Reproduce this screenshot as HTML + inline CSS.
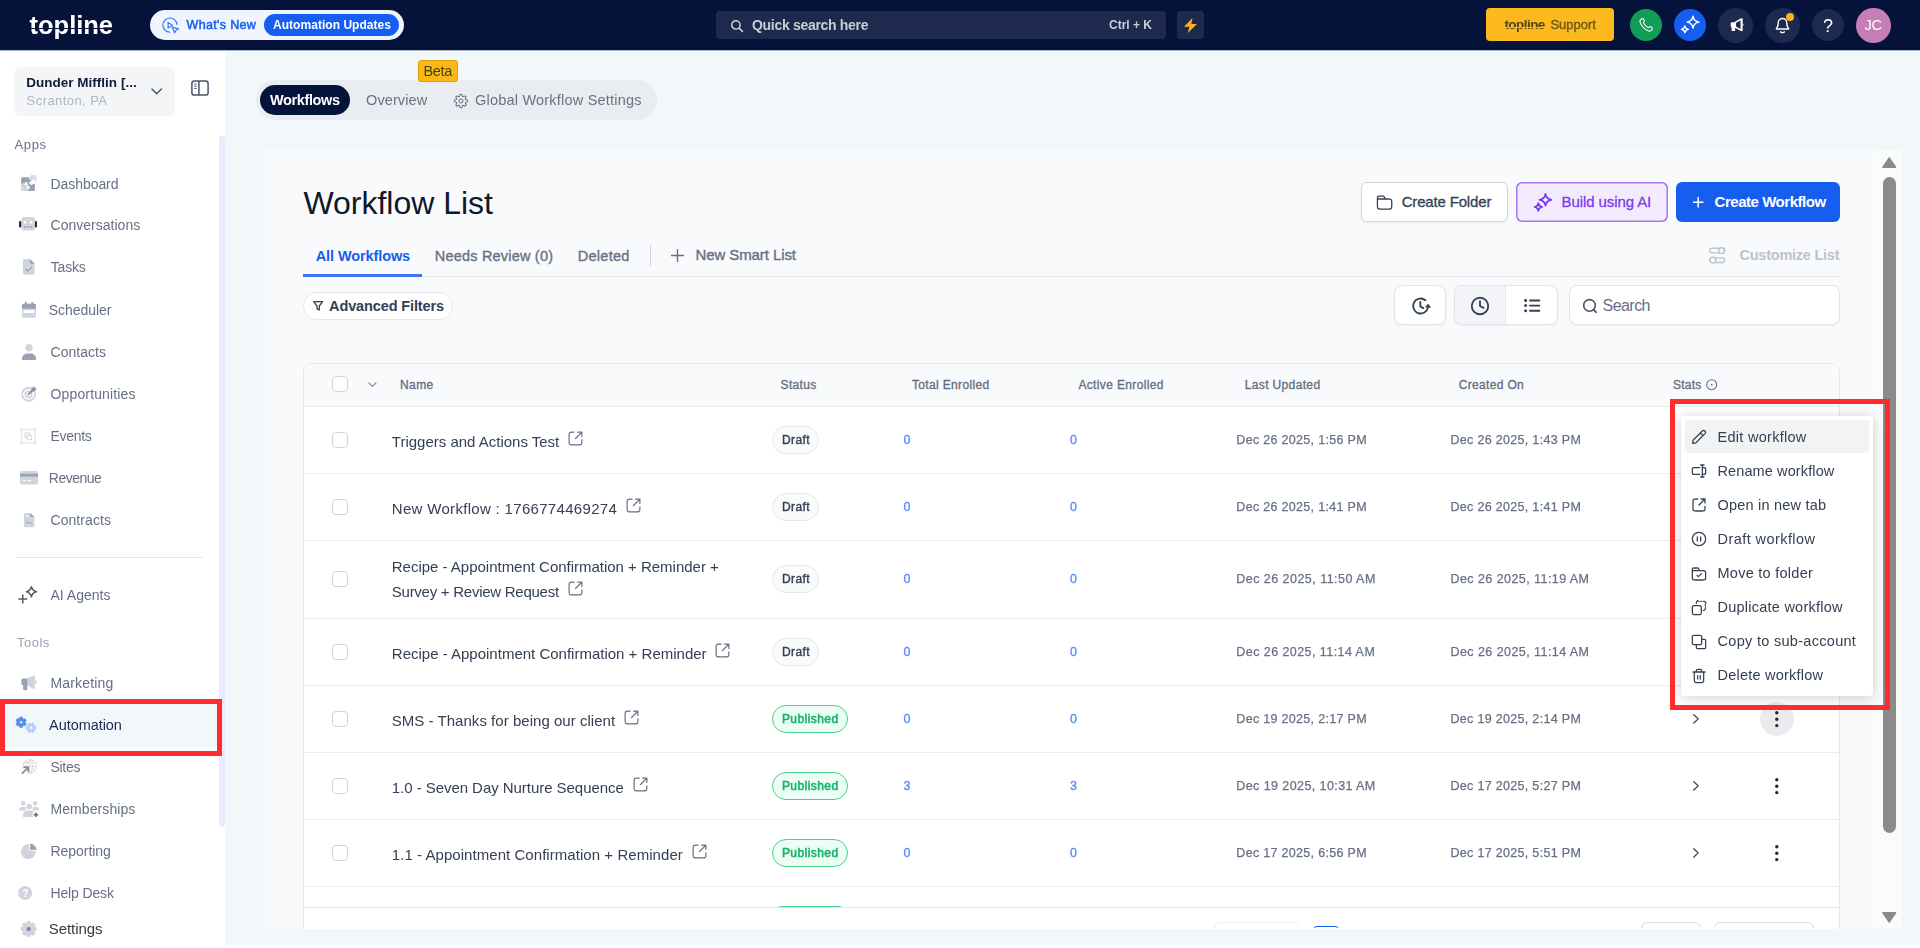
<!DOCTYPE html>
<html lang="en">
<head>
<meta charset="utf-8">
<title>Workflow List</title>
<style>
*{box-sizing:border-box;margin:0;padding:0}
html,body{width:1920px;height:948px;overflow:hidden}
body{font-family:"Liberation Sans",sans-serif;background:#fff;color:#101828;position:relative;font-size:14px}
svg{display:block;overflow:visible}
a{text-decoration:none}
h1{font-weight:400}
#bg{position:absolute;left:225px;top:51px;width:1695px;height:894px;background:#f2f7fa}
#top{position:absolute;left:0;top:0;width:1920px;height:50px;will-change:transform}
#topbg{position:absolute;left:0;top:0;width:1920px;height:50px;background:#05123a}
#topline{position:absolute;left:0;top:50px;width:1920px;height:1px;background:#aab4c6}
#side{position:absolute;left:0;top:0;width:225px;height:948px;will-change:transform}
#main{position:absolute;left:0;top:0;width:1920px;height:948px}
.gl{position:absolute;left:0;top:0;width:1920px;height:948px;will-change:transform}
#card{position:absolute;left:265px;top:150px;width:1636px;height:778px;background:#f9fafb}
.ann{position:absolute;border:5px solid #fd2c2f;pointer-events:none}
</style>
</head>
<body>
<div id="bg"></div>
<div id="topline"></div>
<div id="topbg"></div>
<header id="top">
<span style="position:absolute;left:29.6px;top:13px;font-size:25.5px;line-height:1;white-space:nowrap;color:#fff;font-weight:700;letter-spacing:-0.030px;">topline</span>
<div style="position:absolute;left:28px;top:28.3px;width:87px;height:0.9px;background:#05123a"></div>
<div style="position:absolute;left:150px;top:10px;width:254px;height:30px;background:#eff4ff;border-radius:15px"></div>
<svg style="position:absolute;left:161.60px;top:16.70px;" width="17" height="17" viewBox="0 0 24 24" fill="none"><path d="M21.200 10.400A10 10 0 1 0 10.800 21.400" stroke="#3b7cf6" stroke-width="1.700" stroke-linecap="round"/><path d="M8.600 7.600v8l6.200-4z" stroke="#3b7cf6" stroke-width="1.700" stroke-linejoin="round"/><path d="M14.400 14.200l9 2.600-3.800 1.800-1.800 3.900z" stroke="#3b7cf6" stroke-width="1.700" stroke-linejoin="round"/></svg>
<span style="position:absolute;left:186.6px;top:19px;font-size:12.5px;line-height:1;white-space:nowrap;color:#155eef;letter-spacing:0.334px;-webkit-text-stroke:.5px #155eef;">What's New</span>
<div style="position:absolute;left:264px;top:14px;width:135px;height:22px;background:#155eef;border-radius:11px"></div>
<span style="position:absolute;left:273.0px;top:19px;font-size:12px;line-height:1;white-space:nowrap;color:#fff;font-weight:700;letter-spacing:0.039px;">Automation Updates</span>
<div style="position:absolute;left:716px;top:11px;width:450px;height:28px;background:#1e2a4d;border-radius:4px"></div>
<svg style="position:absolute;left:729.50px;top:18.50px;" width="13.5" height="13.5" viewBox="0 0 24 24" fill="none"><circle cx="10.5" cy="10.5" r="7.5" stroke="#d0d5dd" stroke-width="2.6"/><path d="M16.5 16.5L22 22" stroke="#d0d5dd" stroke-width="2.8" stroke-linecap="round"/></svg>
<span style="position:absolute;left:752.0px;top:18px;font-size:14px;line-height:1;white-space:nowrap;color:#c8cdd8;font-weight:700;letter-spacing:-0.307px;">Quick search here</span>
<span style="position:absolute;left:1109.0px;top:19px;font-size:12px;line-height:1;white-space:nowrap;color:#c8cdd8;font-weight:700;letter-spacing:-0.002px;">Ctrl + K</span>
<div style="position:absolute;left:1177px;top:11px;width:27px;height:28px;background:#1e2a4d;border-radius:4px"></div>
<svg style="position:absolute;left:1184px;top:17.600px" width="13" height="15" viewBox="3 1 16 22" preserveAspectRatio="none"><path d="M13.500 1L3 13.800h6.600L7.800 23 19 9.800h-7z" fill="#fdb022"/></svg>
<div style="position:absolute;left:1486px;top:8px;width:128.2px;height:33.2px;background:#fbb91c;border-radius:4px"></div>
<span style="position:absolute;left:1504.4px;top:18px;font-size:13.5px;line-height:1;white-space:nowrap;color:#564414;font-weight:700;letter-spacing:-0.542px;">topline</span>
<div style="position:absolute;left:1504px;top:26.7px;width:42px;height:0.5px;background:#fbb91c"></div>
<span style="position:absolute;left:1550.4px;top:18px;font-size:13px;line-height:1;white-space:nowrap;color:#66561c;letter-spacing:0.009px;-webkit-text-stroke:.3px #66561c;">Support</span>
<div style="position:absolute;left:1629.8px;top:8.9px;width:32.4px;height:32.4px;background:#0f9d58;border-radius:50%"></div>
<svg style="position:absolute;left:1638.00px;top:17.00px;" width="16" height="16" viewBox="0 0 24 24" fill="none"><path d="M8.38 8.853a14.603 14.603 0 002.847 4.01 14.603 14.603 0 004.01 2.847c.124.06.187.09.265.112.28.082.625.023.862-.147.067-.048.124-.105.239-.219.35-.35.524-.524.7-.639a2 2 0 012.18 0c.176.115.35.29.7.64l.195.194c.532.532.797.798.942 1.083a2 2 0 010 1.806c-.145.285-.41.551-.942 1.083l-.157.158c-.53.53-.795.794-1.155.997-.4.224-1.020.386-1.479.384-.413-.001-.695-.081-1.260-.241a19.038 19.038 0 01-8.283-4.874A19.039 19.039 0 013.17 7.764c-.16-.565-.24-.847-.241-1.26-.002-.459.16-1.079.384-1.479.203-.36.468-.625.997-1.155l.158-.157c.532-.532.798-.797 1.083-.942a2 2 0 011.806 0c.285.145.551.41 1.083.942l.195.195c.35.35.524.524.639.7a2 2 0 010 2.18c-.115.176-.29.35-.64.7-.114.115-.171.172-.219.239-.17.237-.229.582-.147.862.022.078.052.14.112.265z" stroke="#fff" stroke-width="1.6" stroke-linecap="round" stroke-linejoin="round"/></svg>
<div style="position:absolute;left:1674px;top:8.9px;width:32px;height:32.4px;background:#155eef;border-radius:50%"></div>
<svg style="position:absolute;left:1680.00px;top:12.00px;" width="20" height="20" viewBox="0 0 24 24" fill="none"><path d="M15.6 4.8999999999999995Q16.54 11.16 22.80 12.10Q16.54 13.04 15.60 19.30Q14.66 13.04 8.40 12.10Q14.66 11.16 15.60 4.90Z" stroke="#fff" stroke-width="1.700" stroke-linejoin="round"/><path d="M5.8 16.700000000000003Q6.33 20.27 9.90 20.80Q6.33 21.33 5.80 24.90Q5.27 21.33 1.70 20.80Q5.27 20.27 5.80 16.70Z" stroke="#fff" stroke-width="1.700" stroke-linejoin="round"/></svg>
<div style="position:absolute;left:1718px;top:7.8px;width:35px;height:35.4px;background:#1e2a4d;border-radius:50%"></div>
<svg style="position:absolute;left:1730.20px;top:17.90px;" width="13.4" height="13.1" viewBox="0 0 13.4 13.1" fill="none"><path d="M.7 5.2a1 1 0 011-1h3.6v5h-3.600a1 1 0 01-1-1z" fill="#fff"/><path d="M1.600 9h3.600v3.200a.9.9 0 01-.9.900h-1.800a.9.9 0 01-.9-.9z" fill="#fff"/><path d="M5.300 4.400l6-3.400v11.400l-6-3.400z" stroke="#fff" stroke-width="1.500" stroke-linejoin="round"/><path d="M12.100 .3v12.800" stroke="#fff" stroke-width="1.100"/><path d="M13 5.800v1.800" stroke="#fff" stroke-width=".8"/></svg>
<div style="position:absolute;left:1764.8px;top:7.8px;width:35.2px;height:35.4px;background:#1e2a4d;border-radius:50%"></div>
<svg style="position:absolute;left:1773.50px;top:17.00px;" width="17" height="17" viewBox="0 0 24 24" fill="none"><path d="M9.354 21c.705.622 1.632 1 2.646 1s1.94-.378 2.646-1M18 8A6 6 0 106 8c0 3.09-.78 5.206-1.650 6.605-.735 1.180-1.102 1.770-1.089 1.935.015.182.054.252.2.360.133.100.731.100 1.927.100h13.224c1.196 0 1.794 0 1.927-.1.146-.108.185-.178.2-.36.013-.165-.354-.755-1.089-1.935C18.780 13.206 18 11.090 18 8z" stroke="#fff" stroke-width="2" stroke-linecap="round" stroke-linejoin="round"/></svg>
<div style="position:absolute;left:1786px;top:13.2px;width:8px;height:8px;background:#fdb022;border-radius:50%"></div>
<div style="position:absolute;left:1812px;top:8.9px;width:32px;height:32.4px;background:#1e2a4d;border-radius:50%"></div>
<span style="position:absolute;left:1823.0px;top:17px;font-size:18px;line-height:1;white-space:nowrap;color:#fff;">?</span>
<div style="position:absolute;left:1856px;top:7.8px;width:35px;height:35.4px;background:#c57fb6;border-radius:50%"></div>
<span style="position:absolute;left:1864.6px;top:18px;font-size:14.5px;line-height:1;white-space:nowrap;color:#fff;letter-spacing:-0.334px;">JC</span>
</header>
<nav id="side">
<div style="position:absolute;left:14px;top:66.5px;width:161px;height:49.5px;background:#f4f5f7;border-radius:7px"></div>
<span style="position:absolute;left:26.2px;top:76px;font-size:13.5px;line-height:1;white-space:nowrap;color:#101a3a;font-weight:700;letter-spacing:0.014px;">Dunder Mifflin [...</span>
<span style="position:absolute;left:26.6px;top:94px;font-size:13px;line-height:1;white-space:nowrap;color:#aeb6c4;letter-spacing:0.433px;">Scranton, PA</span>
<svg style="position:absolute;left:151.30px;top:88.00px;" width="11.4" height="6.7" viewBox="0 0 12 7" fill="none"><path d="M1 1l5 5 5-5" stroke="#475467" stroke-width="1.5" stroke-linecap="round" stroke-linejoin="round"/></svg>
<svg style="position:absolute;left:191.00px;top:80.40px;" width="18" height="16" viewBox="0 0 18 16" fill="none"><rect x=".9" y=".9" width="16.2" height="14.2" rx="2.4" stroke="#475467" stroke-width="1.5"/><path d="M7.9 1v14" stroke="#475467" stroke-width="1.5"/><path d="M3.2 4h2.4M3.2 6.2h2.4M3.2 8.4h2.4" stroke="#475467" stroke-width="1"/></svg>
<span style="position:absolute;left:14.5px;top:138px;font-size:13px;line-height:1;white-space:nowrap;color:#667085;letter-spacing:0.620px;">Apps</span>
<div style="position:absolute;left:219px;top:136.3px;width:5.8px;height:690.5px;background:#ebe9fe;border-radius:3px"></div>
<a style="position:absolute;left:50.5px;top:177px;font-size:14px;line-height:1;white-space:nowrap;color:#667085;letter-spacing:-0.062px;">Dashboard</a>
<a style="position:absolute;left:50.5px;top:218px;font-size:14px;line-height:1;white-space:nowrap;color:#667085;letter-spacing:0.017px;">Conversations</a>
<a style="position:absolute;left:50.8px;top:260px;font-size:14px;line-height:1;white-space:nowrap;color:#667085;letter-spacing:-0.199px;">Tasks</a>
<a style="position:absolute;left:48.8px;top:303px;font-size:14px;line-height:1;white-space:nowrap;color:#667085;letter-spacing:-0.056px;">Scheduler</a>
<a style="position:absolute;left:50.5px;top:345px;font-size:14px;line-height:1;white-space:nowrap;color:#667085;letter-spacing:0.021px;">Contacts</a>
<a style="position:absolute;left:50.5px;top:387px;font-size:14px;line-height:1;white-space:nowrap;color:#667085;letter-spacing:0.143px;">Opportunities</a>
<a style="position:absolute;left:50.5px;top:429px;font-size:14px;line-height:1;white-space:nowrap;color:#667085;letter-spacing:-0.303px;">Events</a>
<a style="position:absolute;left:48.8px;top:471px;font-size:14px;line-height:1;white-space:nowrap;color:#667085;letter-spacing:-0.491px;">Revenue</a>
<a style="position:absolute;left:50.5px;top:513px;font-size:14px;line-height:1;white-space:nowrap;color:#667085;letter-spacing:0.060px;">Contracts</a>
<a style="position:absolute;left:50.5px;top:588px;font-size:14px;line-height:1;white-space:nowrap;color:#667085;letter-spacing:-0.005px;">AI Agents</a>
<a style="position:absolute;left:50.5px;top:676px;font-size:14px;line-height:1;white-space:nowrap;color:#667085;letter-spacing:0.154px;">Marketing</a>
<a style="position:absolute;left:50.5px;top:760px;font-size:14px;line-height:1;white-space:nowrap;color:#667085;letter-spacing:-0.306px;">Sites</a>
<a style="position:absolute;left:50.5px;top:802px;font-size:14px;line-height:1;white-space:nowrap;color:#667085;letter-spacing:0.077px;">Memberships</a>
<a style="position:absolute;left:50.5px;top:844px;font-size:14px;line-height:1;white-space:nowrap;color:#667085;letter-spacing:-0.038px;">Reporting</a>
<a style="position:absolute;left:50.5px;top:886px;font-size:14px;line-height:1;white-space:nowrap;color:#667085;letter-spacing:-0.137px;">Help Desk</a>
<div style="position:absolute;left:16.2px;top:557px;width:186.7px;height:1px;background:#e4e7f0"></div>
<span style="position:absolute;left:16.9px;top:636px;font-size:13px;line-height:1;white-space:nowrap;color:#98a2b3;letter-spacing:0.510px;">Tools</span>
<div style="position:absolute;left:0px;top:704px;width:219px;height:42.5px;background:#f2f7fa"></div>
<a style="position:absolute;left:49.1px;top:718px;font-size:14.5px;line-height:1;white-space:nowrap;color:#1d2b53;letter-spacing:-0.062px;">Automation</a>
<a style="position:absolute;left:48.8px;top:921px;font-size:15px;line-height:1;white-space:nowrap;color:#333a44;letter-spacing:-0.086px;">Settings</a>
<svg style="position:absolute;left:21.00px;top:175.20px;" width="15.7" height="16.2" viewBox="0 0 15.7 16.2" fill="none"><path d="M1.300 2.300h5.800a1.200 1.200 0 011.200 1.200v.900a1.300 1.300 0 110 2.400v1.900h-2.100a1.300 1.300 0 10-2.400 0h-3.700v-5.200a1.200 1.200 0 011.200-1.200z" fill="#98a2b3"/><path d="M.100 8.800h3.300a1.500 1.500 0 103 0h.700v2.300a1.300 1.300 0 100 2.600v2.200h-5.800a1.200 1.200 0 01-1.200-1.200z" fill="#d0d5dd"/><path d="M7.300 8.800h1.900l1.400 1.700 1.500-1.700h1.800v5.900a1.200 1.200 0 01-1.200 1.200h-5.400v-2a1.500 1.500 0 100-3z" fill="#98a2b3"/><path d="M9.500 0h5a1.200 1.200 0 011.200 1.200v5.200h-2.200a1.300 1.300 0 10-2.300 0h-1.700v-2a1.300 1.300 0 110-2.400z" fill="#d0d5dd" opacity=".75"/></svg>
<svg style="position:absolute;left:18.90px;top:216.90px;" width="18" height="13.4" viewBox="0 0 18 13.4" fill="none"><rect x="0" y="4.100" width="2.800" height="6.400" rx="1.300" fill="#2a2f3a"/><rect x="15.200" y="4.100" width="2.800" height="6.400" rx="1.300" fill="#2a2f3a"/><rect x="2.300" y="0" width="13.700" height="13.400" rx="3" fill="#d0d5dd"/><rect x="4.900" y="4.100" width="2.400" height="2.500" fill="#fff"/><rect x="11" y="4.100" width="2.300" height="2.500" fill="#fff"/><rect x="5.200" y="9.100" width="1.500" height="1.600" fill="#8a90a0"/><rect x="8.200" y="9.100" width="1.500" height="1.600" fill="#8a90a0"/><rect x="11.200" y="9.100" width="1.500" height="1.600" fill="#8a90a0"/></svg>
<svg style="position:absolute;left:23.30px;top:259.20px;" width="11.6" height="15.7" viewBox="0 0 11.6 15.7" fill="none"><path d="M1.500 0h5.400l4.700 4.700v9.500a1.500 1.500 0 01-1.500 1.500h-8.600a1.500 1.500 0 01-1.500-1.500v-12.700a1.500 1.500 0 011.500-1.500z" fill="#d0d5dd"/><path d="M6.900 0l4.700 4.700h-3.500a1.200 1.200 0 01-1.200-1.200z" fill="#98a2b3"/><path d="M2.400 9.900l2.300 2.300 4.600-4.600" stroke="#98a2b3" stroke-width="1.300" fill="none"/></svg>
<svg style="position:absolute;left:22.00px;top:301.80px;" width="14" height="15.7" viewBox="0 0 14 15.7" fill="none"><rect x="0" y="1.700" width="14" height="14" rx="1.500" fill="#d0d5dd"/><path d="M0 3.200a1.500 1.500 0 011.500-1.500h11a1.500 1.500 0 011.500 1.500v3.600h-14z" fill="#98a2b3"/><rect x="2.800" y="0" width="1.800" height="3.400" rx=".6" fill="#98a2b3"/><rect x="9.400" y="0" width="1.800" height="3.400" rx=".6" fill="#98a2b3"/><rect x="1.600" y="8.200" width="10.800" height="2.800" fill="#fff"/></svg>
<svg style="position:absolute;left:22.00px;top:343.60px;" width="14" height="16" viewBox="0 0 14 16" fill="none"><circle cx="7" cy="3.700" r="3.700" fill="#d0d5dd"/><path d="M0 16v-1.200c0-3 2.400-5.300 5.300-5.300h3.400c2.900 0 5.300 2.300 5.300 5.300v1.200z" fill="#98a2b3"/></svg>
<svg style="position:absolute;left:21.00px;top:385.80px;" width="16" height="15.8" viewBox="0 0 16 15.8" fill="none"><circle cx="7.600" cy="8.200" r="6.500" stroke="#d0d5dd" stroke-width="1.900"/><circle cx="7.600" cy="8.200" r="3.100" stroke="#d0d5dd" stroke-width="1.700"/><path d="M7.400 8.400l4.400-4.400" stroke="#8791a5" stroke-width="1.900" stroke-linecap="round"/><path d="M10.400 2.800l2.800-2.800.5 2.300 2.300.5-2.800 2.800-2.500-.3z" fill="#8791a5"/></svg>
<svg style="position:absolute;left:19.70px;top:427.60px;" width="16.5" height="16.4" viewBox="0 0 16.5 16.4" fill="none"><rect x="1.500" y="1.500" width="13.500" height="13.400" stroke="#e4e7ec" stroke-width="1.300"/><rect x="0" y="0" width="3" height="3" rx=".8" fill="#e4e7ec"/><rect x="13.500" y="0" width="3" height="3" rx=".8" fill="#e4e7ec"/><rect x="0" y="13.400" width="3" height="3" rx=".8" fill="#e4e7ec"/><rect x="13.500" y="13.400" width="3" height="3" rx=".8" fill="#e4e7ec"/><rect x="5" y="5" width="4.500" height="4.500" stroke="#d0d5dd" stroke-width="1"/><rect x="7.200" y="7.200" width="4.500" height="4.500" stroke="#d0d5dd" stroke-width="1" fill="#fff"/></svg>
<svg style="position:absolute;left:20.00px;top:471.00px;" width="18" height="13.6" viewBox="0 0 18 13.6" fill="none"><rect x="0" y="0" width="18" height="13.600" rx="1.800" fill="#d0d5dd"/><rect x="0" y="2.700" width="18" height="2.900" fill="#98a2b3"/><rect x="2.800" y="9.200" width="2.800" height="1.200" fill="#fff"/><rect x="6.800" y="9.200" width="4.400" height="1.200" fill="#fff"/></svg>
<svg style="position:absolute;left:23.90px;top:512.50px;" width="10.4" height="14.2" viewBox="0 0 10.4 14.2" fill="none"><path d="M1.300 0h5l4.100 4.100v8.800a1.300 1.300 0 01-1.300 1.300h-7.800a1.300 1.300 0 01-1.300-1.300v-11.600a1.300 1.300 0 011.300-1.300z" fill="#d0d5dd"/><path d="M6.300 0l4.100 4.100h-3a1.100 1.100 0 01-1.100-1.100z" fill="#98a2b3"/><rect x="2.200" y="2" width="2" height="2.400" fill="#eef0f3"/><path d="M2.200 10.800l1.300-2.200 1.100 2 1-.6h2.600" stroke="#98a2b3" stroke-width=".9" fill="none"/></svg>
<svg style="position:absolute;left:18.30px;top:586.00px;" width="19.2" height="18" viewBox="0 0 19.2 18" fill="none"><path d="M13.4 0.7999999999999998Q14.40 4.80 18.40 5.80Q14.40 6.80 13.40 10.80Q12.40 6.80 8.40 5.80Q12.40 4.80 13.40 0.80Z" stroke="#525866" stroke-width="1.500" stroke-linejoin="round"/><path d="M4.800 8.600v8.800M.4 13h8.800" stroke="#525866" stroke-width="1.500"/></svg>
<svg style="position:absolute;left:20.90px;top:675.40px;" width="16" height="15.6" viewBox="0 0 16 15.6" fill="none"><path d="M5.800 3.600l8-3.600v14.500l-8-4.200z" fill="#d0d5dd"/><path d="M13.800 5.200a2.100 2.100 0 010 4.200z" fill="#d0d5dd"/><path d="M1.900 3.600h4.400v6.700h-4.400a1.500 1.500 0 01-1.500-1.500v-3.700a1.500 1.500 0 011.500-1.500z" fill="#98a2b3"/><path d="M2.100 10h4.200v4.100a1.200 1.200 0 01-1.200 1.200h-1.800a1.200 1.200 0 01-1.200-1.200z" fill="#98a2b3"/></svg>
<svg style="position:absolute;left:16.20px;top:717.20px;" width="20.6" height="16.2" viewBox="0 0 20.6 16.2" fill="none"><path d="M3.71 -0.02L6.49 -0.02L6.84 1.60L7.35 1.89L8.93 1.39L10.31 3.79L9.09 4.91L9.09 5.49L10.31 6.61L8.93 9.01L7.35 8.51L6.84 8.80L6.49 10.42L3.71 10.42L3.36 8.80L2.85 8.51L1.27 9.01L-0.11 6.61L1.11 5.49L1.11 4.91L-0.11 3.79L1.27 1.39L2.85 1.89L3.36 1.60ZM6.6 5.2a1.5 1.5 0 10-3.0 0a1.5 1.5 0 103.0 0Z" fill="#558af0" fill-rule="evenodd" stroke="#558af0" stroke-width=".5" stroke-linejoin="round"/><path d="M20.03 9.46L20.03 12.14L18.51 12.50L18.22 12.99L18.67 14.48L16.35 15.82L15.29 14.69L14.71 14.69L13.65 15.82L11.33 14.48L11.78 12.99L11.49 12.50L9.97 12.14L9.97 9.46L11.49 9.10L11.78 8.61L11.33 7.12L13.65 5.78L14.71 6.91L15.29 6.91L16.35 5.78L18.67 7.12L18.22 8.61L18.51 9.10ZM16.6 10.8a1.6 1.6 0 10-3.2 0a1.6 1.6 0 103.2 0Z" fill="#b9cffa" fill-rule="evenodd" stroke="#b9cffa" stroke-width=".5" stroke-linejoin="round"/></svg>
<svg style="position:absolute;left:20.90px;top:759.30px;" width="16" height="15.8" viewBox="0 0 16 15.8" fill="none"><circle cx="8.600" cy="7.400" r="6.700" stroke="#d9dce3" stroke-width="1.500" stroke-dasharray="2.600 1.100"/><ellipse cx="8.600" cy="7.400" rx="3" ry="6.700" stroke="#d9dce3" stroke-width="1.300" stroke-dasharray="2.600 1.100"/><path d="M2 7.400h13.300M3 3.800h11.200M3 11h11.200M8.600 .800v13.200" stroke="#d9dce3" stroke-width="1.200" stroke-dasharray="2.400 1"/><path d="M0 15.800l.800-5 5.800-4.600 2.800 2.600-3.800 7z" fill="#fff"/><path d="M1.400 14.200l5.600-5.600M3.400 8.200h4v4" stroke="#858da0" stroke-width="1.800" fill="none" stroke-linecap="round" stroke-linejoin="round"/></svg>
<svg style="position:absolute;left:18.80px;top:800.90px;" width="20.4" height="16.1" viewBox="0 0 20.4 16.1" fill="none"><circle cx="4.200" cy="2.200" r="2.200" fill="#d0d5dd"/><circle cx="10.200" cy="5.400" r="2.700" fill="#d0d5dd"/><circle cx="16.200" cy="2.200" r="2.200" fill="#d0d5dd"/><path d="M0 9.600c0-2.200 1.700-3.800 3.800-3.800h1.400c.6 0 1.200.2 1.700.5-.6 1-.6 2.300.3 3.300z" fill="#d0d5dd"/><path d="M20.400 9.600c0-2.200-1.700-3.800-3.800-3.800h-1.400c-.6 0-1.200.2-1.700.5.600 1 .6 2.300-.3 3.300z" fill="#d0d5dd"/><path d="M4 16v-2c0-2.700 2-4.600 4.600-4.600h3.200c2.600 0 4.600 1.900 4.600 4.600v2z" fill="#d0d5dd"/><circle cx="16.800" cy="13.600" r="3.200" fill="#fff"/><path d="M16.900 11.400v4.600M14.600 13.700h4.600" stroke="#5f667a" stroke-width="1.500"/></svg>
<svg style="position:absolute;left:20.90px;top:843.00px;" width="16" height="16.1" viewBox="0 0 16 16.1" fill="none"><circle cx="7.400" cy="8.700" r="7.400" fill="#d0d5dd"/><path d="M8.600 0a7.400 7.400 0 017.400 7.400h-7.400z" fill="#98a2b3" stroke="#fff" stroke-width="1"/></svg>
<svg style="position:absolute;left:17.90px;top:886.00px;" width="14.3" height="14" viewBox="0 0 14.3 14" fill="none"><circle cx="7.100" cy="7" r="7" fill="#d0d5dd"/></svg>
<span style="position:absolute;left:22.6px;top:889px;font-size:10px;line-height:1;white-space:nowrap;color:#fff;font-weight:700;">?</span>
<svg style="position:absolute;left:21.20px;top:921.40px;" width="15.4" height="16" viewBox="0 0 15.4 16" fill="none"><path d="M15.44 6.43L15.44 9.57L13.16 10.24L13.14 10.27L14.28 12.36L12.06 14.58L9.97 13.44L9.94 13.46L9.27 15.74L6.13 15.74L5.46 13.46L5.43 13.44L3.34 14.58L1.12 12.36L2.26 10.27L2.24 10.24L-0.04 9.57L-0.04 6.43L2.24 5.76L2.26 5.73L1.12 3.64L3.34 1.42L5.43 2.56L5.46 2.54L6.13 0.26L9.27 0.26L9.94 2.54L9.97 2.56L12.06 1.42L14.28 3.64L13.14 5.73L13.16 5.76ZM7.7 8a0 0 0 10-0 0a0 0 0 100 0Z" fill="#d0d5dd" fill-rule="evenodd" stroke="#d0d5dd" stroke-width=".5" stroke-linejoin="round"/><circle cx="7.700" cy="8" r="2.100" fill="#7a85a0"/></svg>
</nav>
<main id="main">
<div class="gl" id="modtabs">
<div style="position:absolute;left:256px;top:80px;width:401px;height:40px;background:#e9edf1;border-radius:20px"></div>
<div style="position:absolute;left:260px;top:85px;width:90px;height:30px;background:#05123a;border-radius:15px"></div>
<span style="position:absolute;left:270.0px;top:93px;font-size:14.5px;line-height:1;white-space:nowrap;color:#fff;font-weight:700;letter-spacing:-0.381px;">Workflows</span>
<span style="position:absolute;left:366.0px;top:93px;font-size:14.5px;line-height:1;white-space:nowrap;color:#6b7280;letter-spacing:0.109px;">Overview</span>
<svg style="position:absolute;left:452.80px;top:92.50px;" width="16" height="16" viewBox="0 0 24 24" fill="none"><circle cx="12" cy="12" r="3" stroke="#6b7280" stroke-width="1.500"/><path d="M18.727 14.727a1.500 1.500 0 00.300 1.655l.055.054a1.816 1.816 0 010 2.573 1.818 1.818 0 01-2.573 0l-.055-.055a1.500 1.500 0 00-1.654-.300 1.500 1.500 0 00-.910 1.373v.155a1.818 1.818 0 11-3.636 0v-.082a1.500 1.500 0 00-.982-1.373 1.500 1.500 0 00-1.654.300l-.055.055a1.818 1.818 0 01-3.106-1.287 1.818 1.818 0 01.533-1.286l.055-.055a1.500 1.500 0 00.300-1.654 1.500 1.500 0 00-1.373-.910h-.155a1.818 1.818 0 110-3.636h.082a1.500 1.500 0 001.373-.982 1.500 1.500 0 00-.300-1.654l-.055-.055a1.818 1.818 0 112.573-2.573l.055.055a1.500 1.500 0 001.654.300h.073a1.500 1.500 0 00.909-1.373v-.155a1.818 1.818 0 013.636 0v.082a1.500 1.500 0 00.910 1.373 1.500 1.500 0 001.654-.300l.055-.055a1.818 1.818 0 112.573 2.573l-.055.055a1.500 1.500 0 00-.300 1.654v.073a1.500 1.500 0 001.373.909h.155a1.818 1.818 0 010 3.636h-.082a1.500 1.500 0 00-1.373.910z" stroke="#667085" stroke-width="1.600" stroke-linecap="round" stroke-linejoin="round"/></svg>
<span style="position:absolute;left:475.0px;top:93px;font-size:14.5px;line-height:1;white-space:nowrap;color:#6b7280;letter-spacing:0.208px;">Global Workflow Settings</span>
<div style="position:absolute;left:418px;top:60px;width:40px;height:22px;background:#fdb913;border:1px solid #dc9d07;border-radius:3px"></div>
<span style="position:absolute;left:423.4px;top:64px;font-size:14.5px;line-height:1;white-space:nowrap;color:#44401f;letter-spacing:-0.281px;">Beta</span>
</div>
<section id="card">
</section>
<div style="position:absolute;left:1878px;top:150px;width:23px;height:778px;background:#fbfbfb"></div>
<svg style="position:absolute;left:1882.30px;top:156.60px;" width="14.5" height="11" viewBox="0 0 14.5 11" fill="none"><path d="M7.250 .800l6.400 9.400h-12.800z" fill="#8b8b8b" stroke="#8b8b8b" stroke-width="1.400" stroke-linejoin="round"/></svg>
<div style="position:absolute;left:1883px;top:177px;width:12.9px;height:655.8px;background:#8b8b8b;border-radius:6.500px"></div>
<svg style="position:absolute;left:1882.30px;top:911.60px;" width="14.5" height="11" viewBox="0 0 14.5 11" fill="none"><path d="M7.250 10.200l6.400-9.400h-12.800z" fill="#8b8b8b" stroke="#8b8b8b" stroke-width="1.400" stroke-linejoin="round"/></svg>
<h1 style="position:absolute;left:303.4px;top:187px;font-size:32px;line-height:1;white-space:nowrap;color:#101828;letter-spacing:-0.006px;margin:0;">Workflow List</h1>
<div style="position:absolute;left:1361px;top:182px;width:147px;height:40px;background:#fff;border:1px solid #d0d5dd;border-radius:6px;box-shadow:0 1px 2px rgba(16,24,40,.06)"></div>
<svg style="position:absolute;left:1376.20px;top:193.60px;" width="17.2" height="17.2" viewBox="0 0 24 24" fill="none"><path d="M13 7l-1.116-2.231c-.32-.642-.481-.963-.72-1.198a2 2 0 00-.748-.462C10.100 3 9.740 3 9.022 3H5.200c-1.120 0-1.680 0-2.108.218a2 2 0 00-.874.874C2 4.520 2 5.080 2 6.200V7m0 0h15.200c1.680 0 2.520 0 3.162.327a3 3 0 011.311 1.311C22 9.280 22 10.120 22 11.800v4.400c0 1.680 0 2.520-.327 3.162a3 3 0 01-1.311 1.311C19.720 21 18.880 21 17.200 21H6.800c-1.680 0-2.520 0-3.162-.327a3 3 0 01-1.311-1.311C2 18.720 2 17.880 2 16.200V7z" stroke="#344054" stroke-width="1.800" stroke-linecap="round" stroke-linejoin="round"/></svg>
<span style="position:absolute;left:1401.7px;top:194px;font-size:15px;line-height:1;white-space:nowrap;color:#344054;letter-spacing:-0.168px;-webkit-text-stroke:.3px #344054;">Create Folder</span>
<div style="position:absolute;left:1516px;top:182px;width:152px;height:40px;background:#f3ebfd;box-shadow:inset 0 0 0 1.600px #a57af0;border-radius:6px"></div>
<svg style="position:absolute;left:1533.00px;top:190.00px;" width="20" height="20" viewBox="0 0 24 24" fill="none"><path d="M15 4.66Q15.92 10.84 22.10 11.76Q15.92 12.68 15.00 18.86Q14.08 12.68 7.90 11.76Q14.08 10.84 15.00 4.66Z" stroke="#7c3aed" stroke-width="2.100" stroke-linejoin="round"/><path d="M6.4 15.799999999999999Q7.00 19.80 11.00 20.40Q7.00 21.00 6.40 25.00Q5.80 21.00 1.80 20.40Q5.80 19.80 6.40 15.80Z" stroke="#7c3aed" stroke-width="2.100" stroke-linejoin="round"/></svg>
<span style="position:absolute;left:1561.5px;top:194px;font-size:15px;line-height:1;white-space:nowrap;color:#7c3aed;letter-spacing:-0.085px;-webkit-text-stroke:.3px #7c3aed;">Build using AI</span>
<div style="position:absolute;left:1676px;top:182px;width:164px;height:40.4px;background:#155eef;border-radius:6px"></div>
<svg style="position:absolute;left:1693.20px;top:197.30px;" width="10.4" height="10.4" viewBox="0 0 10.4 10.4" fill="none"><path d="M5.200 0v10.400M0 5.200h10.400" stroke="#fff" stroke-width="1.500"/></svg>
<span style="position:absolute;left:1714.6px;top:194px;font-size:15px;line-height:1;white-space:nowrap;color:#fff;font-weight:700;letter-spacing:-0.471px;">Create Workflow</span>
<div style="position:absolute;left:303px;top:276px;width:1537px;height:1px;background:#e4e7ec"></div>
<div style="position:absolute;left:303px;top:274px;width:119.3px;height:2.6px;background:#3b73f5"></div>
<span style="position:absolute;left:315.7px;top:249px;font-size:14.5px;line-height:1;white-space:nowrap;color:#155eef;font-weight:700;letter-spacing:-0.092px;">All Workflows</span>
<span style="position:absolute;left:434.8px;top:249px;font-size:14.5px;line-height:1;white-space:nowrap;color:#667085;letter-spacing:0.197px;-webkit-text-stroke:.35px #667085;">Needs Review (0)</span>
<span style="position:absolute;left:577.7px;top:249px;font-size:14.5px;line-height:1;white-space:nowrap;color:#667085;letter-spacing:0.286px;-webkit-text-stroke:.35px #667085;">Deleted</span>
<div style="position:absolute;left:650px;top:245.4px;width:1px;height:20.2px;background:#d0d5dd"></div>
<svg style="position:absolute;left:670.70px;top:248.90px;" width="13" height="13" viewBox="0 0 13 13" fill="none"><path d="M6.500 0v13M0 6.500h13" stroke="#667085" stroke-width="1.400"/></svg>
<span style="position:absolute;left:695.4px;top:247px;font-size:15px;line-height:1;white-space:nowrap;color:#667085;letter-spacing:-0.085px;-webkit-text-stroke:.35px #667085;">New Smart List</span>
<svg style="position:absolute;left:1708.60px;top:247.00px;" width="16.4" height="16.8" viewBox="0 0 16.4 16.8" fill="none"><rect x=".700" y="1.300" width="15" height="4.600" rx="2.300" stroke="#bcc3ce" stroke-width="1.400"/><circle cx="12.500" cy="3.700" r="2.900" stroke="#bcc3ce" stroke-width="1.400" fill="#f9fafb"/><rect x=".700" y="10.900" width="15" height="4.600" rx="2.300" stroke="#bcc3ce" stroke-width="1.400"/><circle cx="3.900" cy="13.200" r="2.900" stroke="#bcc3ce" stroke-width="1.400" fill="#f9fafb"/></svg>
<span style="position:absolute;left:1739.5px;top:248px;font-size:14.5px;line-height:1;white-space:nowrap;color:#bcc3ce;font-weight:700;letter-spacing:-0.240px;">Customize List</span>
<div style="position:absolute;left:303px;top:291.6px;width:149.5px;height:28.2px;background:#fff;border:1px solid #e4e7ec;border-radius:14px"></div>
<svg style="position:absolute;left:313.00px;top:300.50px;" width="10.3" height="10.4" viewBox="0 0 10.3 10.4" fill="none"><path d="M.700 .700h8.900l-3.300 4.300v3.900l-2.300-1.100v-2.800z" stroke="#344054" stroke-width="1.300" stroke-linejoin="round"/></svg>
<span style="position:absolute;left:329.1px;top:299px;font-size:14.5px;line-height:1;white-space:nowrap;color:#344054;font-weight:700;letter-spacing:-0.130px;">Advanced Filters</span>
<div style="position:absolute;left:1394px;top:285px;width:51.5px;height:40px;background:#fff;border:1px solid #e1e4ea;border-radius:8px;box-shadow:0 1px 2px rgba(16,24,40,.05)"></div>
<svg style="position:absolute;left:1410.50px;top:295.50px;" width="20" height="20" viewBox="0 0 24 24" fill="none"><path d="M20.360 13.560A9 9 0 1117.290 5.110" stroke="#344054" stroke-width="2.200" stroke-linecap="round"/><path d="M11.200 7.200v5.200l3.600 2.100" stroke="#344054" stroke-width="2.200" stroke-linecap="round" stroke-linejoin="round"/><path d="M17.600 13.200l3 -3.400 2.600 3.800z" fill="#344054" stroke="#344054" stroke-width="1" stroke-linejoin="round"/></svg>
<div style="position:absolute;left:1454px;top:285px;width:103.5px;height:40px;background:#fff;border:1px solid #e1e4ea;border-radius:8px;overflow:hidden;box-shadow:0 1px 2px rgba(16,24,40,.05)"><div style="position:absolute;left:0;top:0;width:50.500px;height:100%;background:#f2f4f7;border-right:1px solid #e4e7ec"></div></div>
<svg style="position:absolute;left:1469.90px;top:295.50px;" width="20" height="20" viewBox="0 0 24 24" fill="none"><circle cx="12" cy="12" r="9.900" stroke="#344054" stroke-width="2.200"/><path d="M12 6.200V12l4.200 2.300" stroke="#344054" stroke-width="2.200" stroke-linecap="round" stroke-linejoin="round"/></svg>
<svg style="position:absolute;left:1523.50px;top:298.90px;" width="17" height="13.2" viewBox="0 0 17 13.2" fill="none"><path d="M6 1.500h9.400M6 6.600h9.400M6 11.700h9.400" stroke="#344054" stroke-width="1.900" stroke-linecap="round"/><circle cx="1.600" cy="1.500" r="1.500" fill="#344054"/><circle cx="1.600" cy="6.600" r="1.500" fill="#344054"/><circle cx="1.600" cy="11.700" r="1.500" fill="#344054"/></svg>
<div style="position:absolute;left:1568.5px;top:285px;width:271.5px;height:40px;background:#fff;border:1px solid #e1e4ea;border-radius:8px;box-shadow:0 1px 2px rgba(16,24,40,.05)"></div>
<svg style="position:absolute;left:1582.00px;top:297.50px;" width="16" height="16" viewBox="0 0 16 16" fill="none"><circle cx="7.500" cy="7.400" r="5.800" stroke="#475467" stroke-width="1.600"/><path d="M11.700 11.600L13.900 14.200" stroke="#475467" stroke-width="1.800" stroke-linecap="round"/></svg>
<span style="position:absolute;left:1602.5px;top:298px;font-size:16px;line-height:1;white-space:nowrap;color:#667085;letter-spacing:-0.541px;">Search</span>
<div id="tbl" style="position:absolute;left:303px;top:362.500px;width:1537px;height:566px;border:1px solid #e4e7ec;border-bottom:0;border-radius:9px 9px 0 0;background:#fff;overflow:hidden">
<div style="position:absolute;left:0;top:0;width:100%;height:43px;background:#f9fafb;border-bottom:1px solid #e4e7ec"></div>
</div>
<div style="position:absolute;left:332px;top:376px;width:16px;height:16px;background:#fff;border:1px solid #d0d5dd;border-radius:4px"></div>
<svg style="position:absolute;left:367.80px;top:382.00px;" width="8.8" height="5.8" viewBox="0 0 8.8 5.8" fill="none"><path d="M.800 .800l3.600 3.600 3.600-3.600" stroke="#7d8799" stroke-width="1.150" stroke-linecap="round" stroke-linejoin="round"/></svg>
<span style="position:absolute;left:400.0px;top:379px;font-size:12px;line-height:1;white-space:nowrap;color:#626d82;letter-spacing:0.395px;-webkit-text-stroke:.3px #626d82;">Name</span>
<span style="position:absolute;left:780.6px;top:379px;font-size:12px;line-height:1;white-space:nowrap;color:#626d82;letter-spacing:0.334px;-webkit-text-stroke:.3px #626d82;">Status</span>
<span style="position:absolute;left:911.9px;top:379px;font-size:12px;line-height:1;white-space:nowrap;color:#626d82;letter-spacing:0.352px;-webkit-text-stroke:.3px #626d82;">Total Enrolled</span>
<span style="position:absolute;left:1078.4px;top:379px;font-size:12px;line-height:1;white-space:nowrap;color:#626d82;letter-spacing:0.361px;-webkit-text-stroke:.3px #626d82;">Active Enrolled</span>
<span style="position:absolute;left:1244.7px;top:379px;font-size:12px;line-height:1;white-space:nowrap;color:#626d82;letter-spacing:0.364px;-webkit-text-stroke:.3px #626d82;">Last Updated</span>
<span style="position:absolute;left:1458.8px;top:379px;font-size:12px;line-height:1;white-space:nowrap;color:#626d82;letter-spacing:0.328px;-webkit-text-stroke:.3px #626d82;">Created On</span>
<span style="position:absolute;left:1673.0px;top:379px;font-size:12px;line-height:1;white-space:nowrap;color:#626d82;letter-spacing:0.235px;-webkit-text-stroke:.3px #626d82;">Stats</span>
<svg style="position:absolute;left:1706.30px;top:378.80px;" width="11.4" height="11.4" viewBox="0 0 11.4 11.4" fill="none"><circle cx="5.700" cy="5.700" r="5" stroke="#667085" stroke-width="1.100"/><circle cx="5.700" cy="5.700" r=".900" fill="#667085"/></svg>
<div class="gl" id="rows">
<div style="position:absolute;left:304px;top:473px;width:1535px;height:1px;background:#eaecf0"></div>
<div style="position:absolute;left:332px;top:431.7px;width:16px;height:16px;background:#fff;border:1px solid #d0d5dd;border-radius:4px"></div>
<span style="position:absolute;left:391.8px;top:434px;font-size:15px;line-height:1;white-space:nowrap;color:#344054;letter-spacing:-0.004px;">Triggers and Actions Test</span>
<svg style="position:absolute;left:567.10px;top:430.00px;" width="17" height="17" viewBox="0 0 24 24" fill="none"><path d="M21 9V3m0 0h-6m6 0l-9 9m-2-9H7.800c-1.680 0-2.520 0-3.162.327a3 3 0 00-1.311 1.311C3 5.280 3 6.120 3 7.800v8.400c0 1.680 0 2.520.327 3.162a3 3 0 001.311 1.311C5.280 21 6.120 21 7.800 21h8.400c1.680 0 2.520 0 3.162-.327a3 3 0 001.311-1.311C21 18.720 21 17.880 21 16.200V14" stroke="#667085" stroke-width="1.7" stroke-linecap="round" stroke-linejoin="round"/></svg>
<div style="position:absolute;left:772.4px;top:425.5px;width:47px;height:28px;background:#f9fafb;border:1px solid #e4e7ec;border-radius:14px"></div>
<span style="position:absolute;left:782.0px;top:434px;font-size:12px;line-height:1;white-space:nowrap;color:#344054;letter-spacing:0.421px;-webkit-text-stroke:.38px #344054;">Draft</span>
<span style="position:absolute;left:903.4px;top:434px;font-size:12.5px;line-height:1;white-space:nowrap;color:#528bff;letter-spacing:0.547px;-webkit-text-stroke:.3px #528bff;">0</span>
<span style="position:absolute;left:1070.0px;top:434px;font-size:12.5px;line-height:1;white-space:nowrap;color:#528bff;letter-spacing:0.547px;-webkit-text-stroke:.3px #528bff;">0</span>
<span style="position:absolute;left:1236.3px;top:434px;font-size:12.5px;line-height:1;white-space:nowrap;color:#667085;letter-spacing:0.311px;-webkit-text-stroke:.25px #667085;">Dec 26 2025, 1:56 PM</span>
<span style="position:absolute;left:1450.5px;top:434px;font-size:12.5px;line-height:1;white-space:nowrap;color:#667085;letter-spacing:0.311px;-webkit-text-stroke:.25px #667085;">Dec 26 2025, 1:43 PM</span>
<div style="position:absolute;left:304px;top:540px;width:1535px;height:1px;background:#eaecf0"></div>
<div style="position:absolute;left:332px;top:498.7px;width:16px;height:16px;background:#fff;border:1px solid #d0d5dd;border-radius:4px"></div>
<span style="position:absolute;left:391.8px;top:501px;font-size:15px;line-height:1;white-space:nowrap;color:#344054;letter-spacing:0.314px;">New Workflow : 1766774469274</span>
<svg style="position:absolute;left:624.60px;top:497.00px;" width="17" height="17" viewBox="0 0 24 24" fill="none"><path d="M21 9V3m0 0h-6m6 0l-9 9m-2-9H7.800c-1.680 0-2.520 0-3.162.327a3 3 0 00-1.311 1.311C3 5.280 3 6.120 3 7.800v8.400c0 1.680 0 2.520.327 3.162a3 3 0 001.311 1.311C5.280 21 6.120 21 7.800 21h8.400c1.680 0 2.520 0 3.162-.327a3 3 0 001.311-1.311C21 18.720 21 17.880 21 16.200V14" stroke="#667085" stroke-width="1.7" stroke-linecap="round" stroke-linejoin="round"/></svg>
<div style="position:absolute;left:772.4px;top:492.5px;width:47px;height:28px;background:#f9fafb;border:1px solid #e4e7ec;border-radius:14px"></div>
<span style="position:absolute;left:782.0px;top:501px;font-size:12px;line-height:1;white-space:nowrap;color:#344054;letter-spacing:0.421px;-webkit-text-stroke:.38px #344054;">Draft</span>
<span style="position:absolute;left:903.4px;top:501px;font-size:12.5px;line-height:1;white-space:nowrap;color:#528bff;letter-spacing:0.547px;-webkit-text-stroke:.3px #528bff;">0</span>
<span style="position:absolute;left:1070.0px;top:501px;font-size:12.5px;line-height:1;white-space:nowrap;color:#528bff;letter-spacing:0.547px;-webkit-text-stroke:.3px #528bff;">0</span>
<span style="position:absolute;left:1236.3px;top:501px;font-size:12.5px;line-height:1;white-space:nowrap;color:#667085;letter-spacing:0.311px;-webkit-text-stroke:.25px #667085;">Dec 26 2025, 1:41 PM</span>
<span style="position:absolute;left:1450.5px;top:501px;font-size:12.5px;line-height:1;white-space:nowrap;color:#667085;letter-spacing:0.311px;-webkit-text-stroke:.25px #667085;">Dec 26 2025, 1:41 PM</span>
<div style="position:absolute;left:304px;top:618px;width:1535px;height:1px;background:#eaecf0"></div>
<div style="position:absolute;left:332px;top:571.2px;width:16px;height:16px;background:#fff;border:1px solid #d0d5dd;border-radius:4px"></div>
<span style="position:absolute;left:391.8px;top:559px;font-size:15px;line-height:1;white-space:nowrap;color:#344054;letter-spacing:-0.015px;">Recipe - Appointment Confirmation + Reminder +</span>
<span style="position:absolute;left:391.8px;top:584px;font-size:15px;line-height:1;white-space:nowrap;color:#344054;letter-spacing:-0.259px;">Survey + Review Request</span>
<svg style="position:absolute;left:566.90px;top:580.40px;" width="17" height="17" viewBox="0 0 24 24" fill="none"><path d="M21 9V3m0 0h-6m6 0l-9 9m-2-9H7.800c-1.680 0-2.520 0-3.162.327a3 3 0 00-1.311 1.311C3 5.280 3 6.120 3 7.800v8.400c0 1.680 0 2.520.327 3.162a3 3 0 001.311 1.311C5.280 21 6.120 21 7.800 21h8.400c1.680 0 2.520 0 3.162-.327a3 3 0 001.311-1.311C21 18.720 21 17.880 21 16.200V14" stroke="#667085" stroke-width="1.7" stroke-linecap="round" stroke-linejoin="round"/></svg>
<div style="position:absolute;left:772.4px;top:565.0px;width:47px;height:28px;background:#f9fafb;border:1px solid #e4e7ec;border-radius:14px"></div>
<span style="position:absolute;left:782.0px;top:573px;font-size:12px;line-height:1;white-space:nowrap;color:#344054;letter-spacing:0.421px;-webkit-text-stroke:.38px #344054;">Draft</span>
<span style="position:absolute;left:903.4px;top:573px;font-size:12.5px;line-height:1;white-space:nowrap;color:#528bff;letter-spacing:0.547px;-webkit-text-stroke:.3px #528bff;">0</span>
<span style="position:absolute;left:1070.0px;top:573px;font-size:12.5px;line-height:1;white-space:nowrap;color:#528bff;letter-spacing:0.547px;-webkit-text-stroke:.3px #528bff;">0</span>
<span style="position:absolute;left:1236.3px;top:573px;font-size:12.5px;line-height:1;white-space:nowrap;color:#667085;letter-spacing:0.464px;-webkit-text-stroke:.25px #667085;">Dec 26 2025, 11:50 AM</span>
<span style="position:absolute;left:1450.5px;top:573px;font-size:12.5px;line-height:1;white-space:nowrap;color:#667085;letter-spacing:0.439px;-webkit-text-stroke:.25px #667085;">Dec 26 2025, 11:19 AM</span>
<div style="position:absolute;left:304px;top:685px;width:1535px;height:1px;background:#eaecf0"></div>
<div style="position:absolute;left:332px;top:643.7px;width:16px;height:16px;background:#fff;border:1px solid #d0d5dd;border-radius:4px"></div>
<span style="position:absolute;left:391.8px;top:646px;font-size:15px;line-height:1;white-space:nowrap;color:#344054;letter-spacing:0.001px;">Recipe - Appointment Confirmation + Reminder</span>
<svg style="position:absolute;left:714.40px;top:642.00px;" width="17" height="17" viewBox="0 0 24 24" fill="none"><path d="M21 9V3m0 0h-6m6 0l-9 9m-2-9H7.800c-1.680 0-2.520 0-3.162.327a3 3 0 00-1.311 1.311C3 5.280 3 6.120 3 7.800v8.400c0 1.680 0 2.520.327 3.162a3 3 0 001.311 1.311C5.280 21 6.120 21 7.800 21h8.400c1.680 0 2.520 0 3.162-.327a3 3 0 001.311-1.311C21 18.720 21 17.880 21 16.200V14" stroke="#667085" stroke-width="1.7" stroke-linecap="round" stroke-linejoin="round"/></svg>
<div style="position:absolute;left:772.4px;top:637.5px;width:47px;height:28px;background:#f9fafb;border:1px solid #e4e7ec;border-radius:14px"></div>
<span style="position:absolute;left:782.0px;top:646px;font-size:12px;line-height:1;white-space:nowrap;color:#344054;letter-spacing:0.421px;-webkit-text-stroke:.38px #344054;">Draft</span>
<span style="position:absolute;left:903.4px;top:646px;font-size:12.5px;line-height:1;white-space:nowrap;color:#528bff;letter-spacing:0.547px;-webkit-text-stroke:.3px #528bff;">0</span>
<span style="position:absolute;left:1070.0px;top:646px;font-size:12.5px;line-height:1;white-space:nowrap;color:#528bff;letter-spacing:0.547px;-webkit-text-stroke:.3px #528bff;">0</span>
<span style="position:absolute;left:1236.3px;top:646px;font-size:12.5px;line-height:1;white-space:nowrap;color:#667085;letter-spacing:0.439px;-webkit-text-stroke:.25px #667085;">Dec 26 2025, 11:14 AM</span>
<span style="position:absolute;left:1450.5px;top:646px;font-size:12.5px;line-height:1;white-space:nowrap;color:#667085;letter-spacing:0.439px;-webkit-text-stroke:.25px #667085;">Dec 26 2025, 11:14 AM</span>
<div style="position:absolute;left:304px;top:752px;width:1535px;height:1px;background:#eaecf0"></div>
<div style="position:absolute;left:332px;top:710.7px;width:16px;height:16px;background:#fff;border:1px solid #d0d5dd;border-radius:4px"></div>
<span style="position:absolute;left:391.8px;top:713px;font-size:15px;line-height:1;white-space:nowrap;color:#344054;letter-spacing:0.030px;">SMS - Thanks for being our client</span>
<svg style="position:absolute;left:622.90px;top:709.00px;" width="17" height="17" viewBox="0 0 24 24" fill="none"><path d="M21 9V3m0 0h-6m6 0l-9 9m-2-9H7.800c-1.680 0-2.520 0-3.162.327a3 3 0 00-1.311 1.311C3 5.280 3 6.120 3 7.800v8.400c0 1.680 0 2.520.327 3.162a3 3 0 001.311 1.311C5.280 21 6.120 21 7.800 21h8.400c1.680 0 2.520 0 3.162-.327a3 3 0 001.311-1.311C21 18.720 21 17.880 21 16.200V14" stroke="#667085" stroke-width="1.7" stroke-linecap="round" stroke-linejoin="round"/></svg>
<div style="position:absolute;left:772.1px;top:704.5px;width:75.8px;height:28px;background:#ecfdf3;border:1px solid #47d18c;border-radius:14px"></div>
<span style="position:absolute;left:781.9px;top:713px;font-size:12px;line-height:1;white-space:nowrap;color:#17b26a;letter-spacing:0.435px;-webkit-text-stroke:.55px #17b26a;">Published</span>
<span style="position:absolute;left:903.4px;top:713px;font-size:12.5px;line-height:1;white-space:nowrap;color:#528bff;letter-spacing:0.547px;-webkit-text-stroke:.3px #528bff;">0</span>
<span style="position:absolute;left:1070.0px;top:713px;font-size:12.5px;line-height:1;white-space:nowrap;color:#528bff;letter-spacing:0.547px;-webkit-text-stroke:.3px #528bff;">0</span>
<span style="position:absolute;left:1236.3px;top:713px;font-size:12.5px;line-height:1;white-space:nowrap;color:#667085;letter-spacing:0.311px;-webkit-text-stroke:.25px #667085;">Dec 19 2025, 2:17 PM</span>
<span style="position:absolute;left:1450.5px;top:713px;font-size:12.5px;line-height:1;white-space:nowrap;color:#667085;letter-spacing:0.311px;-webkit-text-stroke:.25px #667085;">Dec 19 2025, 2:14 PM</span>
<div style="position:absolute;left:1759.8px;top:701.5px;width:34px;height:34px;background:#e9ebed;border-radius:50%"></div>
<svg style="position:absolute;left:1692.80px;top:714.00px;" width="6.2" height="9.8" viewBox="0 0 6.2 9.8" fill="none"><path d="M.800 .800l4.400 4.100-4.400 4.100" stroke="#344054" stroke-width="1.300" stroke-linecap="round" stroke-linejoin="round"/></svg>
<svg style="position:absolute;left:1775.10px;top:710.90px;" width="3.6" height="16.4" viewBox="0 0 3.6 16.4" fill="none"><circle cx="1.800" cy="1.800" r="1.700" fill="#1d2939"/><circle cx="1.800" cy="8.200" r="1.700" fill="#1d2939"/><circle cx="1.800" cy="14.600" r="1.700" fill="#1d2939"/></svg>
<div style="position:absolute;left:304px;top:819px;width:1535px;height:1px;background:#eaecf0"></div>
<div style="position:absolute;left:332px;top:777.7px;width:16px;height:16px;background:#fff;border:1px solid #d0d5dd;border-radius:4px"></div>
<span style="position:absolute;left:391.8px;top:780px;font-size:15px;line-height:1;white-space:nowrap;color:#344054;letter-spacing:-0.047px;">1.0 - Seven Day Nurture Sequence</span>
<svg style="position:absolute;left:631.60px;top:776.00px;" width="17" height="17" viewBox="0 0 24 24" fill="none"><path d="M21 9V3m0 0h-6m6 0l-9 9m-2-9H7.800c-1.680 0-2.520 0-3.162.327a3 3 0 00-1.311 1.311C3 5.280 3 6.120 3 7.800v8.400c0 1.680 0 2.520.327 3.162a3 3 0 001.311 1.311C5.280 21 6.120 21 7.800 21h8.400c1.680 0 2.520 0 3.162-.327a3 3 0 001.311-1.311C21 18.720 21 17.880 21 16.200V14" stroke="#667085" stroke-width="1.7" stroke-linecap="round" stroke-linejoin="round"/></svg>
<div style="position:absolute;left:772.1px;top:771.5px;width:75.8px;height:28px;background:#ecfdf3;border:1px solid #47d18c;border-radius:14px"></div>
<span style="position:absolute;left:781.9px;top:780px;font-size:12px;line-height:1;white-space:nowrap;color:#17b26a;letter-spacing:0.435px;-webkit-text-stroke:.55px #17b26a;">Published</span>
<span style="position:absolute;left:903.4px;top:780px;font-size:12.5px;line-height:1;white-space:nowrap;color:#528bff;letter-spacing:0.547px;-webkit-text-stroke:.3px #528bff;">3</span>
<span style="position:absolute;left:1070.0px;top:780px;font-size:12.5px;line-height:1;white-space:nowrap;color:#528bff;letter-spacing:0.547px;-webkit-text-stroke:.3px #528bff;">3</span>
<span style="position:absolute;left:1236.3px;top:780px;font-size:12.5px;line-height:1;white-space:nowrap;color:#667085;letter-spacing:0.417px;-webkit-text-stroke:.25px #667085;">Dec 19 2025, 10:31 AM</span>
<span style="position:absolute;left:1450.5px;top:780px;font-size:12.5px;line-height:1;white-space:nowrap;color:#667085;letter-spacing:0.311px;-webkit-text-stroke:.25px #667085;">Dec 17 2025, 5:27 PM</span>
<svg style="position:absolute;left:1692.80px;top:781.00px;" width="6.2" height="9.8" viewBox="0 0 6.2 9.8" fill="none"><path d="M.800 .800l4.400 4.100-4.400 4.100" stroke="#344054" stroke-width="1.300" stroke-linecap="round" stroke-linejoin="round"/></svg>
<svg style="position:absolute;left:1775.10px;top:777.90px;" width="3.6" height="16.4" viewBox="0 0 3.6 16.4" fill="none"><circle cx="1.800" cy="1.800" r="1.700" fill="#1d2939"/><circle cx="1.800" cy="8.200" r="1.700" fill="#1d2939"/><circle cx="1.800" cy="14.600" r="1.700" fill="#1d2939"/></svg>
<div style="position:absolute;left:304px;top:886px;width:1535px;height:1px;background:#eaecf0"></div>
<div style="position:absolute;left:332px;top:844.7px;width:16px;height:16px;background:#fff;border:1px solid #d0d5dd;border-radius:4px"></div>
<span style="position:absolute;left:391.8px;top:847px;font-size:15px;line-height:1;white-space:nowrap;color:#344054;letter-spacing:0.052px;">1.1 - Appointment Confirmation + Reminder</span>
<svg style="position:absolute;left:690.60px;top:843.00px;" width="17" height="17" viewBox="0 0 24 24" fill="none"><path d="M21 9V3m0 0h-6m6 0l-9 9m-2-9H7.800c-1.680 0-2.520 0-3.162.327a3 3 0 00-1.311 1.311C3 5.280 3 6.120 3 7.800v8.400c0 1.680 0 2.520.327 3.162a3 3 0 001.311 1.311C5.280 21 6.120 21 7.800 21h8.400c1.680 0 2.520 0 3.162-.327a3 3 0 001.311-1.311C21 18.720 21 17.880 21 16.200V14" stroke="#667085" stroke-width="1.7" stroke-linecap="round" stroke-linejoin="round"/></svg>
<div style="position:absolute;left:772.1px;top:838.5px;width:75.8px;height:28px;background:#ecfdf3;border:1px solid #47d18c;border-radius:14px"></div>
<span style="position:absolute;left:781.9px;top:847px;font-size:12px;line-height:1;white-space:nowrap;color:#17b26a;letter-spacing:0.435px;-webkit-text-stroke:.55px #17b26a;">Published</span>
<span style="position:absolute;left:903.4px;top:847px;font-size:12.5px;line-height:1;white-space:nowrap;color:#528bff;letter-spacing:0.547px;-webkit-text-stroke:.3px #528bff;">0</span>
<span style="position:absolute;left:1070.0px;top:847px;font-size:12.5px;line-height:1;white-space:nowrap;color:#528bff;letter-spacing:0.547px;-webkit-text-stroke:.3px #528bff;">0</span>
<span style="position:absolute;left:1236.3px;top:847px;font-size:12.5px;line-height:1;white-space:nowrap;color:#667085;letter-spacing:0.311px;-webkit-text-stroke:.25px #667085;">Dec 17 2025, 6:56 PM</span>
<span style="position:absolute;left:1450.5px;top:847px;font-size:12.5px;line-height:1;white-space:nowrap;color:#667085;letter-spacing:0.311px;-webkit-text-stroke:.25px #667085;">Dec 17 2025, 5:51 PM</span>
<svg style="position:absolute;left:1692.80px;top:848.00px;" width="6.2" height="9.8" viewBox="0 0 6.2 9.8" fill="none"><path d="M.800 .800l4.400 4.100-4.400 4.100" stroke="#344054" stroke-width="1.300" stroke-linecap="round" stroke-linejoin="round"/></svg>
<svg style="position:absolute;left:1775.10px;top:844.90px;" width="3.6" height="16.4" viewBox="0 0 3.6 16.4" fill="none"><circle cx="1.800" cy="1.800" r="1.700" fill="#1d2939"/><circle cx="1.800" cy="8.200" r="1.700" fill="#1d2939"/><circle cx="1.800" cy="14.600" r="1.700" fill="#1d2939"/></svg>
<div style="position:absolute;left:772.1px;top:905.5px;width:75.8px;height:3px;background:#ecfdf3;border:1px solid #47d18c;border-bottom:0;border-radius:14px 14px 0 0;height:10px;clip-path:inset(0 0 8px 0)"></div>
<div style="position:absolute;left:304px;top:907px;width:1535px;height:21px;background:#fff;border-top:1px solid #e4e7ec"></div>
<div style="position:absolute;left:1213.8px;top:922.2px;width:84.8px;height:12px;border:1px solid #e4e7ec;border-radius:8px;clip-path:inset(0 0 6.200px 0)"></div>
<div style="position:absolute;left:1311.8px;top:925.6px;width:27.8px;height:12px;border:1.500px solid #155eef;border-radius:5px;clip-path:inset(0 0 9.600px 0)"></div>
<div style="position:absolute;left:1640.8px;top:922.2px;width:59.8px;height:12px;border:1px solid #d0d5dd;border-radius:8px;clip-path:inset(0 0 6.200px 0)"></div>
<div style="position:absolute;left:1714.4px;top:922.2px;width:100.1px;height:12px;border:1px solid #d0d5dd;border-radius:8px;clip-path:inset(0 0 6.200px 0)"></div>
<div style="position:absolute;left:1681px;top:416px;width:192.3px;height:279.7px;background:#fff;border-radius:4px;box-shadow:0 3px 16px rgba(16,24,40,.14),0 0 8px rgba(16,24,40,.07)"></div>
<div style="position:absolute;left:1685px;top:420px;width:184.3px;height:33.3px;background:#f2f3f5;border-radius:3px"></div>
<svg style="position:absolute;left:1690.80px;top:429.30px;" width="16" height="16" viewBox="0 0 24 24" fill="none"><path d="M18 10l-4-4M2.500 21.500l3.384-.376c.413-.046.620-.069.813-.131.172-.056.335-.134.485-.233.170-.112.317-.259.611-.553L21 7a2.828 2.828 0 10-4-4L3.793 16.207c-.294.294-.441.441-.553.610a2 2 0 00-.233.486c-.062.193-.085.400-.131.813L2.500 21.500z" stroke="#344054" stroke-width="1.900" stroke-linecap="round" stroke-linejoin="round"/></svg>
<span style="position:absolute;left:1717.5px;top:430px;font-size:14.5px;line-height:1;white-space:nowrap;color:#344054;letter-spacing:0.282px;">Edit workflow</span>
<svg style="position:absolute;left:1690.80px;top:463.36px;" width="16" height="16" viewBox="0 0 24 24" fill="none"><path d="M13 7H5.200c-1.120 0-1.680 0-2.108.218a2 2 0 00-.874.874C2 8.520 2 9.080 2 10.200v3.600c0 1.120 0 1.680.218 2.108a2 2 0 00.874.874C3.520 17 4.080 17 5.200 17H13m4-10h1.800c1.120 0 1.680 0 2.108.218a2 2 0 01.874.874C22 8.520 22 9.080 22 10.200v3.600c0 1.120 0 1.680-.218 2.108a2 2 0 01-.874.874C20.480 17 19.920 17 18.800 17H17m0 4V3m2.500 0h-5m5 18h-5" stroke="#344054" stroke-width="1.900" stroke-linecap="round" stroke-linejoin="round"/></svg>
<span style="position:absolute;left:1717.5px;top:464px;font-size:14.5px;line-height:1;white-space:nowrap;color:#344054;letter-spacing:0.111px;">Rename workflow</span>
<svg style="position:absolute;left:1690.80px;top:497.42px;" width="16" height="16" viewBox="0 0 24 24" fill="none"><path d="M21 9V3m0 0h-6m6 0l-9 9m-2-9H7.800c-1.680 0-2.520 0-3.162.327a3 3 0 00-1.311 1.311C3 5.280 3 6.120 3 7.800v8.400c0 1.680 0 2.520.327 3.162a3 3 0 001.311 1.311C5.280 21 6.120 21 7.800 21h8.400c1.680 0 2.520 0 3.162-.327a3 3 0 001.311-1.311C21 18.720 21 17.880 21 16.200V14" stroke="#344054" stroke-width="1.900" stroke-linecap="round" stroke-linejoin="round"/></svg>
<span style="position:absolute;left:1717.5px;top:498px;font-size:14.5px;line-height:1;white-space:nowrap;color:#344054;letter-spacing:0.206px;">Open in new tab</span>
<svg style="position:absolute;left:1690.80px;top:531.48px;" width="16" height="16" viewBox="0 0 24 24" fill="none"><circle cx="12" cy="12" r="10" stroke="#344054" stroke-width="1.900"/><path d="M9.500 15V9m5 6V9" stroke="#344054" stroke-width="1.900" stroke-linecap="round"/></svg>
<span style="position:absolute;left:1717.5px;top:532px;font-size:14.5px;line-height:1;white-space:nowrap;color:#344054;letter-spacing:0.434px;">Draft workflow</span>
<svg style="position:absolute;left:1690.80px;top:565.54px;" width="16" height="16" viewBox="0 0 24 24" fill="none"><path d="M13 7l-1.116-2.231c-.32-.642-.481-.963-.72-1.198a2 2 0 00-.748-.462C10.100 3 9.740 3 9.022 3H5.200c-1.120 0-1.680 0-2.108.218a2 2 0 00-.874.874C2 4.520 2 5.080 2 6.200V7m0 0h15.200c1.680 0 2.520 0 3.162.327a3 3 0 011.311 1.311C22 9.280 22 10.120 22 11.800v4.400c0 1.680 0 2.520-.327 3.162a3 3 0 01-1.311 1.311C19.720 21 18.880 21 17.200 21H6.800c-1.680 0-2.520 0-3.162-.327a3 3 0 01-1.311-1.311C2 18.720 2 17.880 2 16.200V7z" stroke="#344054" stroke-width="1.900" stroke-linecap="round" stroke-linejoin="round"/><path d="M9 14l2 2 4.500-4.500" stroke="#344054" stroke-width="1.900" stroke-linecap="round" stroke-linejoin="round"/></svg>
<span style="position:absolute;left:1717.5px;top:566px;font-size:14.5px;line-height:1;white-space:nowrap;color:#344054;letter-spacing:0.262px;">Move to folder</span>
<svg style="position:absolute;left:1690.80px;top:599.60px;" width="16" height="16" viewBox="0 0 24 24" fill="none"><path d="M2 12.500c0-1.400 0-2.100.272-2.635a2.500 2.500 0 011.093-1.093C3.900 8.500 4.600 8.500 6 8.500h5.500c1.400 0 2.100 0 2.635.272a2.500 2.500 0 011.093 1.093c.272.535.272 1.235.272 2.635V18c0 1.400 0 2.100-.272 2.635a2.500 2.500 0 01-1.093 1.093C13.600 22 12.900 22 11.500 22H6c-1.400 0-2.100 0-2.635-.272a2.500 2.500 0 01-1.093-1.093C2 20.100 2 19.400 2 18z" stroke="#344054" stroke-width="1.900" stroke-linejoin="round"/><path d="M8.500 5c0-.930 0-1.395.102-1.776a3 3 0 012.122-2.122C11.105 2 11.570 2 12.500 2M19 2c.930 0 1.395 0 1.776.102a3 3 0 012.122 2.122C22 4.605 22 5.070 22 6m0 5.500c0 .930 0 1.395-.102 1.776a3 3 0 01-2.122 2.122C19.395 15.500 19.500 15.500 19 15.500M15 2h1.500M22 8.200v1" stroke="#344054" stroke-width="1.900" stroke-linecap="round" stroke-linejoin="round" transform="translate(-.5 0)"/></svg>
<span style="position:absolute;left:1717.5px;top:600px;font-size:14.5px;line-height:1;white-space:nowrap;color:#344054;letter-spacing:0.242px;">Duplicate workflow</span>
<svg style="position:absolute;left:1690.80px;top:633.66px;" width="16" height="16" viewBox="0 0 24 24" fill="none"><path d="M8 8V5.200c0-1.120 0-1.680.218-2.108a2 2 0 01.874-.874C9.520 2 10.080 2 11.200 2H18.800c1.120 0 1.680 0 2.108.218a2 2 0 01.874.874C22 3.520 22 4.080 22 5.200V12.800c0 1.120 0 1.680-.218 2.108a2 2 0 01-.874.874C20.480 16 19.920 16 18.800 16H16M5.200 22H12.800c1.120 0 1.680 0 2.108-.218a2 2 0 00.874-.874C16 20.480 16 19.920 16 18.800V11.200c0-1.120 0-1.680-.218-2.108a2 2 0 00-.874-.874C14.480 8 13.920 8 12.800 8H5.200c-1.120 0-1.680 0-2.108.218a2 2 0 00-.874.874C2 9.520 2 10.080 2 11.200V18.800c0 1.120 0 1.680.218 2.108a2 2 0 00.874.874C3.520 22 4.080 22 5.200 22z" stroke="#344054" stroke-width="1.900" stroke-linecap="round" stroke-linejoin="round" transform="matrix(-1 0 0 -1 24 24) matrix(-1 0 0 1 24 0)"/></svg>
<span style="position:absolute;left:1717.5px;top:634px;font-size:14.5px;line-height:1;white-space:nowrap;color:#344054;letter-spacing:0.300px;">Copy to sub-account</span>
<svg style="position:absolute;left:1690.80px;top:667.72px;" width="16" height="16" viewBox="0 0 24 24" fill="none"><path d="M16 6v-.800c0-1.120 0-1.680-.218-2.108a2 2 0 00-.874-.874C14.480 2 13.920 2 12.800 2h-1.600c-1.120 0-1.680 0-2.108.218a2 2 0 00-.874.874C8 3.520 8 4.080 8 5.200V6m2 5.500v5m4-5v5M3 6h18m-2 0v11.200c0 1.680 0 2.520-.327 3.162a3 3 0 01-1.311 1.311C16.720 22 15.880 22 14.200 22H9.800c-1.680 0-2.520 0-3.162-.327a3 3 0 01-1.311-1.311C5 18.720 5 17.880 5 16.200V6" stroke="#344054" stroke-width="1.900" stroke-linecap="round" stroke-linejoin="round"/></svg>
<span style="position:absolute;left:1717.5px;top:668px;font-size:14.5px;line-height:1;white-space:nowrap;color:#344054;letter-spacing:0.225px;">Delete workflow</span>
</div>
</main>
<div class="ann" style="left:1670px;top:399px;width:220px;height:311px"></div>
<div class="ann" style="left:0;top:699px;width:222px;height:57px"></div>
</body>
</html>
